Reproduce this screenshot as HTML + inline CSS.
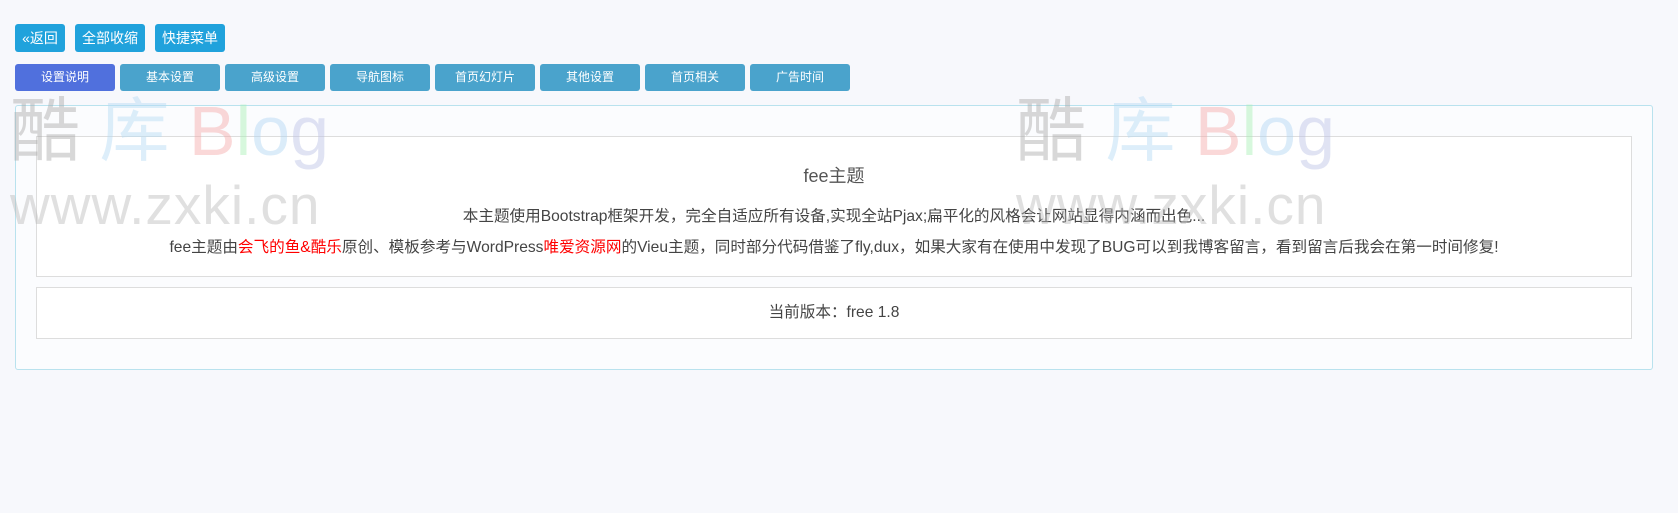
<!DOCTYPE html>
<html><head><meta charset="utf-8"><style>
body{margin:0;width:1678px;height:513px;background:#f7f8fc;font-family:"Liberation Sans","Noto Sans CJK SC",sans-serif;position:relative;overflow:hidden}
.b{position:absolute;top:24px;height:28px;line-height:28px;background:#20a2dc;color:#fff;font-size:14px;border-radius:3px;text-align:center}
.t{position:absolute;top:64px;width:100px;height:27px;line-height:27px;background:#4aa3cc;color:#fff;font-size:12px;border-radius:3px;text-align:center}
.wm{position:absolute;z-index:5;pointer-events:none;opacity:.45}
.wm .a{font-size:70px;line-height:70px;white-space:nowrap;letter-spacing:0}
.wm .c{font-size:55px;line-height:55px;color:#bbb;white-space:nowrap;letter-spacing:1px;margin-top:12px}
.box{position:absolute;border:1px solid #ddd;background:#fff;text-align:center;color:#444}
</style></head><body>
<div class="b" style="left:15px;width:50px">«返回</div>
<div class="b" style="left:75px;width:70px">全部收缩</div>
<div class="b" style="left:155px;width:70px">快捷菜单</div>
<div class="t" style="left:15px;background:#5070dd">设置说明</div>
<div class="t" style="left:120px">基本设置</div>
<div class="t" style="left:225px">高级设置</div>
<div class="t" style="left:330px">导航图标</div>
<div class="t" style="left:435px">首页幻灯片</div>
<div class="t" style="left:540px">其他设置</div>
<div class="t" style="left:645px">首页相关</div>
<div class="t" style="left:750px">广告时间</div>
<div style="position:absolute;left:15px;top:105px;width:1636px;height:263px;border:1px solid #b9e2ee;background:#fbfcfe;border-radius:3px"></div>
<div class="box" style="left:36px;top:136px;width:1594px;height:139px">
<div style="font-size:18px;color:#555;margin-top:25px">fee主题</div>
<div style="font-size:15.6px;margin-top:19px;line-height:20px">本主题使用Bootstrap框架开发，完全自适应所有设备,实现全站Pjax;扁平化的风格会让网站显得内涵而出色...</div>
<div style="font-size:15.6px;margin-top:11px;line-height:20px">fee主题由<span style="color:red">会飞的鱼&amp;酷乐</span>原创、模板参考与WordPress<span style="color:red">唯爱资源网</span>的Vieu主题，同时部分代码借鉴了fly,dux，如果大家有在使用中发现了BUG可以到我博客留言，看到留言后我会在第一时间修复!</div>
</div>
<div class="box" style="left:36px;top:287px;width:1594px;height:50px;line-height:50px;font-size:15.6px">当前版本：free 1.8</div>
<div class="wm" style="left:10px;top:96px"><div class="a"><span style="color:#aaa">酷</span> <span style="color:#b5dbf5">库</span> <span style="color:#f5aaaa">B</span><span style="color:#a8f0b5">l</span><span style="color:#b0d6f3">o</span><span style="color:#bcc2e6">g</span></div><div class="c">www.zxki.cn</div></div>
<div class="wm" style="left:1016px;top:96px"><div class="a"><span style="color:#aaa">酷</span> <span style="color:#b5dbf5">库</span> <span style="color:#f5aaaa">B</span><span style="color:#a8f0b5">l</span><span style="color:#b0d6f3">o</span><span style="color:#bcc2e6">g</span></div><div class="c">www.zxki.cn</div></div>
</body></html>
